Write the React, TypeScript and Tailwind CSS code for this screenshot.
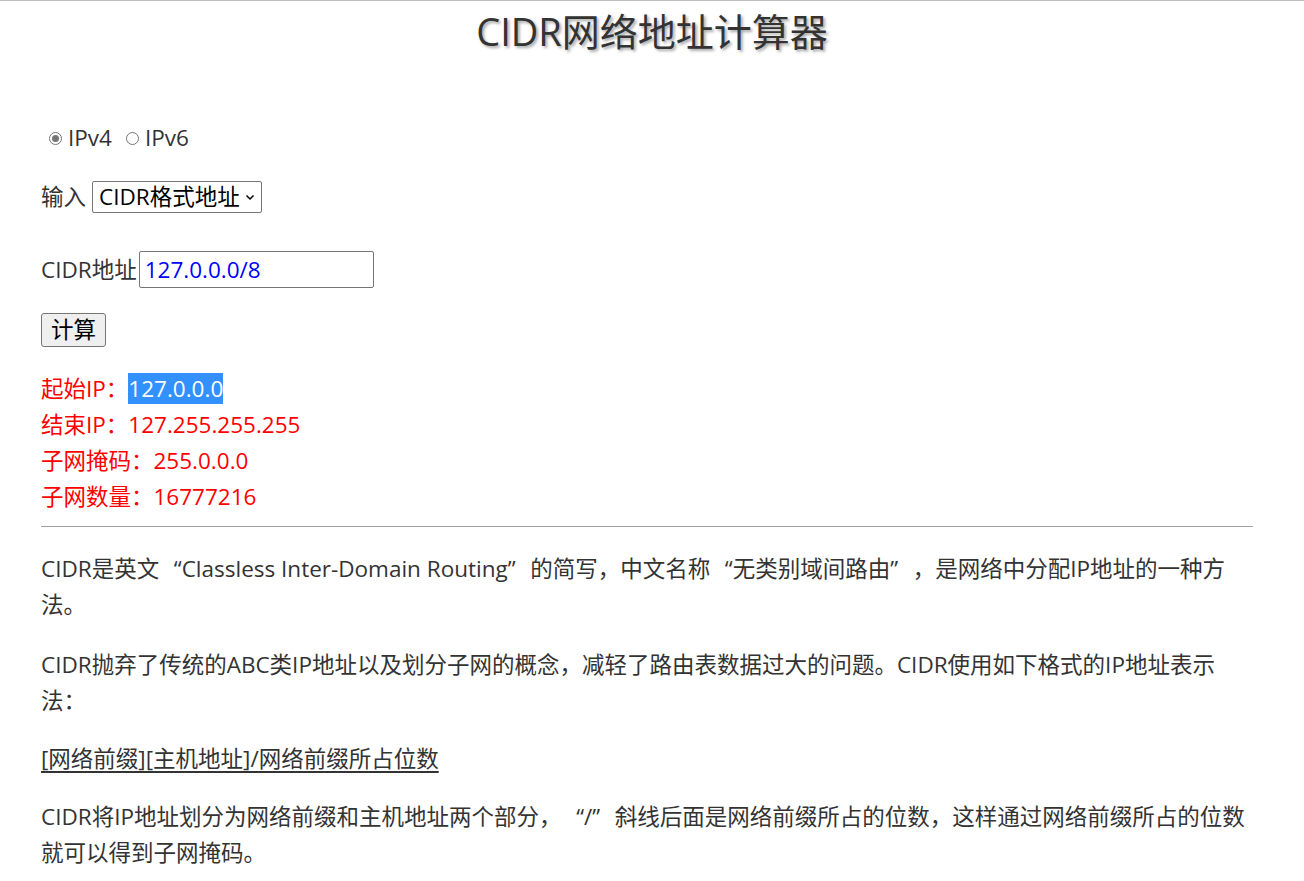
import React from "react";

function LQ() {
  return <span className="inline-block w-[1em] text-right">“</span>;
}
function RQ() {
  return <span className="inline-block w-[1em] text-left">”</span>;
}

export default function App() {
  const font = { fontFamily: '"Open Sans", "Noto Sans CJK SC", sans-serif' };
  return (
    <div className="min-h-[881px] bg-white border-t border-[#bdbdbd] text-[#333333]" style={font}>
      <h1 className="text-center text-[38px] leading-[60px] [text-shadow:2px_2px_3px_rgba(0,0,0,0.35)]">
        CIDR网络地址计算器
      </h1>
      <div className="pl-[41px] w-[1253px] text-[22.5px]">
        <div className="mt-[62px] flex items-center h-[30px] pl-[8px]">
          <span className="w-[13px] h-[13px] rounded-full border border-[#767676] flex items-center justify-center">
            <span className="w-[7px] h-[7px] rounded-full bg-[#767676]" />
          </span>
          <span className="ml-[6px]">IPv4</span>
          <span className="ml-[14px] w-[13px] h-[13px] rounded-full border border-[#767676]" />
          <span className="ml-[6px]">IPv6</span>
        </div>
        <div className="mt-[28px] flex items-center h-[32px]">
          <span>输入</span>
          <div className="ml-[6px] h-[32px] border border-[#767676] rounded-[2px] flex items-center pl-[6px] pr-[6px] text-black">
            <span>CIDR格式地址</span>
            <svg width="10" height="8" viewBox="0 0 10 8" className="ml-[5px]">
              <path d="M1.5 2.5 L5 6 L8.5 2.5" stroke="#000" strokeWidth="1.5" fill="none" />
            </svg>
          </div>
        </div>
        <div className="mt-[38px] flex items-center h-[37px]">
          <span>CIDR地址</span>
          <div className="ml-[2px] w-[235px] h-[37px] border border-[#767676] rounded-[2px] flex items-center pl-[5px] text-[#0000ff]">
            127.0.0.0/8
          </div>
        </div>
        <div className="mt-[25px]">
          <div className="inline-flex items-center justify-center w-[65px] h-[34px] border border-[#767676] rounded-[3px] bg-[#efefef] text-black">
            计算
          </div>
        </div>
        <div className="mt-[24px] leading-[36px] text-[#ff0000]">
          <div>
            起始IP：<span className="bg-[#3390ff] text-white">127.0.0.0</span>
          </div>
          <div>结束IP：127.255.255.255</div>
          <div>子网掩码：255.0.0.0</div>
          <div>子网数量：16777216</div>
        </div>
        <hr className="mt-[11px] border-t border-[#a0a0a0] w-[1212px]" />
        <div className="leading-[36px] w-[1212px]">
          <p className="mt-[24px]">
            CIDR是英文<LQ />Classless Inter-Domain Routing<RQ />的简写，中文名称<LQ />无类别域间路由<RQ />，是网络中分配IP地址的一种方
            <br />
            法。
          </p>
          <p className="mt-[24px]">
            CIDR抛弃了传统的ABC类IP地址以及划分子网的概念，减轻了路由表数据过大的问题。CIDR使用如下格式的IP地址表示
            <br />
            法：
          </p>
          <p className="mt-[22px] underline underline-offset-[4px]">[网络前缀][主机地址]/网络前缀所占位数</p>
          <p className="mt-[22px]">
            CIDR将IP地址划分为网络前缀和主机地址两个部分，<LQ />/<RQ />斜线后面是网络前缀所占的位数，这样通过网络前缀所占的位数
            <br />
            就可以得到子网掩码。
          </p>
        </div>
      </div>
    </div>
  );
}
